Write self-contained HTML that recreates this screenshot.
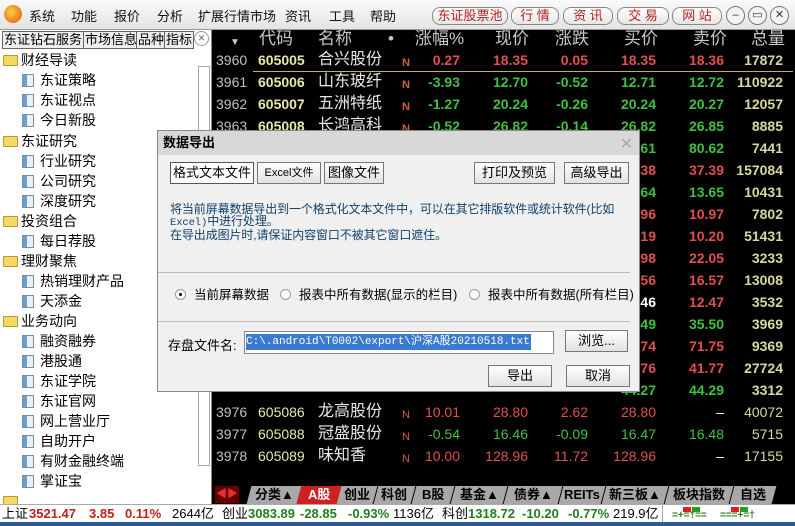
<!DOCTYPE html>
<html><head><meta charset="utf-8">
<style>
*{margin:0;padding:0;box-sizing:border-box}
body{width:795px;height:526px;overflow:hidden;position:relative;background:#000;font-family:"Liberation Sans","Noto Sans CJK SC",sans-serif;}
.a{position:absolute;white-space:nowrap}
#top{left:0;top:0;width:795px;height:30px;background:linear-gradient(#fafafa,#e4e4e4);border-bottom:1px solid #999}
#top .m{top:6px;font-size:13px;color:#111}
.rb{position:absolute;top:7px;height:18px;border:1px solid #888;border-radius:8px;background:linear-gradient(#fff,#e6e6e6);color:#b02020;font-size:13px;text-align:center;line-height:16px}
.cb{position:absolute;top:6px;width:19px;height:19px;border:1px solid #777;border-radius:50%;background:#f4f4f4;font-size:11px;text-align:center;line-height:17px;color:#333}
#left{left:0;top:30px;width:212px;height:474px;background:#fff;border-right:1px solid #888}
.tab{position:absolute;top:1px;height:18px;border:1px solid #666;background:#eee;font-size:13px;line-height:16px;padding:0 1px;color:#000}
.ti{position:absolute;font-size:14px;color:#000;height:20px;line-height:20px}
.fo{display:inline-block;width:15px;height:11px;background:#f6d860;border:1px solid #b89a30;border-radius:1px;margin-right:3px;vertical-align:-1px}
.pg{display:inline-block;width:12px;height:13px;background:linear-gradient(90deg,#6a9fd0 0 4px,#e8f0f8 4px);border:1px solid #7a8ea8;margin-right:6px;vertical-align:-2px}
#grid{left:213px;top:30px;width:582px;height:454px;background:#000}
.h{position:absolute;top:-1px;font-size:17px;color:#c8c8c8;line-height:19px}
.r{position:absolute;left:0;width:582px;height:22px;font-size:14px;font-weight:bold;line-height:22px}
.r span{position:absolute;top:0}
.n{left:3px;color:#c0c0c0;font-weight:normal}
.c{left:45px;color:#e8e8a8}
.nm{left:105px;color:#e8e8e8;font-weight:normal;font-size:16px}
.N{left:189px;color:#d06040;font-size:11px;top:3px!important}
.v{text-align:right;width:70px}
.R{color:#e05050}.G{color:#40c040}.Y{color:#d8d8a0}.W{color:#fff}
#dlg{left:157px;top:130px;width:483px;height:262px;background:#f0f0f0;border:1px solid #888}
#dlg .tb{position:absolute;left:0;top:0;width:481px;height:24px;background:#d8d8d8;font-size:13px;font-weight:bold;line-height:24px;padding-left:5px}
.btn{position:absolute;height:22px;border:1px solid #777;background:linear-gradient(#fdfdfd,#e2e2e2);font-size:13px;text-align:center;line-height:20px}
.tx{position:absolute;font-size:13px;color:#000}
.rad{display:inline-block;width:11px;height:11px;border:1px solid #999;border-radius:50%;background:#fff;vertical-align:-1px;margin-right:8px;position:relative}
#bt{left:213px;top:484px;width:582px;height:20px;background:#000}
.bt{position:absolute;top:2px;height:18px;background:#a8a8a8;font-size:13px;font-weight:bold;line-height:18px;text-align:center;color:#000;transform:skewX(-15deg)}
.bt i{display:inline-block;font-style:normal;transform:skewX(15deg)}
#st{left:0;top:504px;width:795px;height:18px;background:#fff;border-top:1px solid #aaa;font-size:13px;line-height:17px}
#st span{position:absolute}
.sg{color:#208020;font-weight:bold}.sr{color:#c02020;font-weight:bold}
</style></head><body>
<div id="top" class="a">
<div class="a" style="left:4px;top:5px;width:18px;height:18px;border-radius:50%;background:radial-gradient(circle at 40% 40%,#ffd040,#e05010);"></div>
<span class="a m" style="left:29px">系统</span><span class="a m" style="left:71px">功能</span><span class="a m" style="left:114px">报价</span><span class="a m" style="left:157px">分析</span><span class="a m" style="left:198px">扩展行情市场</span><span class="a m" style="left:285px">资讯</span><span class="a m" style="left:329px">工具</span><span class="a m" style="left:370px">帮助</span>
<div class="rb" style="left:432px;width:76px">东证股票池</div>
<div class="rb" style="left:511px;width:48px">行 情</div>
<div class="rb" style="left:563px;width:50px">资 讯</div>
<div class="rb" style="left:617px;width:52px">交 易</div>
<div class="rb" style="left:672px;width:50px">网 站</div>
<div class="cb" style="left:726px">–</div><div class="cb" style="left:748px">▭</div><div class="cb" style="left:770px">✕</div>
</div>
<div id="left" class="a">
<div class="tab" style="left:2px">东证钻石服务</div><div class="tab" style="left:83px">市场信息</div><div class="tab" style="left:136px">品种</div><div class="tab" style="left:164px">指标</div>
<div class="a" style="left:194px;top:1px;width:15px;height:15px;border:1px solid #999;border-radius:50%;font-size:9px;text-align:center;line-height:13px;color:#666">✕</div>
<div class="a" style="left:198px;top:36px;width:12px;height:400px;border:1px solid #aaa;background:#fff"></div>
<div class="ti" style="left:3px;top:20px"><i class="fo"></i>财经导读</div>
<div class="ti" style="left:22px;top:40px"><i class="pg"></i>东证策略</div>
<div class="ti" style="left:22px;top:60px"><i class="pg"></i>东证视点</div>
<div class="ti" style="left:22px;top:80px"><i class="pg"></i>今日新股</div>
<div class="ti" style="left:3px;top:101px"><i class="fo"></i>东证研究</div>
<div class="ti" style="left:22px;top:121px"><i class="pg"></i>行业研究</div>
<div class="ti" style="left:22px;top:141px"><i class="pg"></i>公司研究</div>
<div class="ti" style="left:22px;top:161px"><i class="pg"></i>深度研究</div>
<div class="ti" style="left:3px;top:181px"><i class="fo"></i>投资组合</div>
<div class="ti" style="left:22px;top:201px"><i class="pg"></i>每日荐股</div>
<div class="ti" style="left:3px;top:221px"><i class="fo"></i>理财聚焦</div>
<div class="ti" style="left:22px;top:241px"><i class="pg"></i>热销理财产品</div>
<div class="ti" style="left:22px;top:261px"><i class="pg"></i>天添金</div>
<div class="ti" style="left:3px;top:281px"><i class="fo"></i>业务动向</div>
<div class="ti" style="left:22px;top:301px"><i class="pg"></i>融资融券</div>
<div class="ti" style="left:22px;top:321px"><i class="pg"></i>港股通</div>
<div class="ti" style="left:22px;top:341px"><i class="pg"></i>东证学院</div>
<div class="ti" style="left:22px;top:361px"><i class="pg"></i>东证官网</div>
<div class="ti" style="left:22px;top:381px"><i class="pg"></i>网上营业厅</div>
<div class="ti" style="left:22px;top:401px"><i class="pg"></i>自助开户</div>
<div class="ti" style="left:22px;top:421px"><i class="pg"></i>有财金融终端</div>
<div class="ti" style="left:22px;top:441px"><i class="pg"></i>掌证宝</div>
<div class="ti" style="left:3px;top:461px"><i class="fo"></i></div>
</div>
<div id="grid" class="a">
<span class="h" style="left:17px;font-size:10px;top:3px">▼</span>
<span class="h" style="left:46px">代码</span><span class="h" style="left:105px">名称</span><span class="h" style="left:175px">•</span>
<span class="h" style="left:202px">涨幅%</span><span class="h" style="left:282px">现价</span><span class="h" style="left:342px">涨跌</span><span class="h" style="left:411px">买价</span><span class="h" style="left:480px">卖价</span><span class="h" style="left:538px">总量</span>
<div class="a" style="left:40px;top:41px;width:540px;height:1px;background:#c8b060"></div>

<div class="r" style="top:19px"><span class="n">3960</span><span class="c">605005</span><span class="nm">合兴股份</span><span class="N">N</span><span class="v R" style="left:177px">0.27</span><span class="v R" style="left:245px">18.35</span><span class="v R" style="left:305px">0.05</span><span class="v R" style="left:373px">18.35</span><span class="v R" style="left:441px">18.36</span><span class="v Y" style="left:500px">17872</span></div>
<div class="r" style="top:41px"><span class="n">3961</span><span class="c">605006</span><span class="nm">山东玻纤</span><span class="N">N</span><span class="v G" style="left:177px">-3.93</span><span class="v G" style="left:245px">12.70</span><span class="v G" style="left:305px">-0.52</span><span class="v G" style="left:373px">12.71</span><span class="v G" style="left:441px">12.72</span><span class="v Y" style="left:500px">110922</span></div>
<div class="r" style="top:63px"><span class="n">3962</span><span class="c">605007</span><span class="nm">五洲特纸</span><span class="N">N</span><span class="v G" style="left:177px">-1.27</span><span class="v G" style="left:245px">20.24</span><span class="v G" style="left:305px">-0.26</span><span class="v G" style="left:373px">20.24</span><span class="v G" style="left:441px">20.27</span><span class="v Y" style="left:500px">12057</span></div>
<div class="r" style="top:85px"><span class="n">3963</span><span class="c">605008</span><span class="nm">长鸿高科</span><span class="N">N</span><span class="v G" style="left:177px">-0.52</span><span class="v G" style="left:245px">26.82</span><span class="v G" style="left:305px">-0.14</span><span class="v G" style="left:373px">26.82</span><span class="v G" style="left:441px">26.85</span><span class="v Y" style="left:500px">8885</span></div>
<div class="r" style="top:107px"><span class="v G" style="left:373px">80.61</span><span class="v G" style="left:441px">80.62</span><span class="v Y" style="left:500px">7441</span></div>
<div class="r" style="top:129px"><span class="v R" style="left:373px">37.38</span><span class="v R" style="left:441px">37.39</span><span class="v Y" style="left:500px">157084</span></div>
<div class="r" style="top:151px"><span class="v G" style="left:373px">13.64</span><span class="v G" style="left:441px">13.65</span><span class="v Y" style="left:500px">10431</span></div>
<div class="r" style="top:173px"><span class="v R" style="left:373px">10.96</span><span class="v R" style="left:441px">10.97</span><span class="v Y" style="left:500px">7802</span></div>
<div class="r" style="top:195px"><span class="v R" style="left:373px">10.19</span><span class="v R" style="left:441px">10.20</span><span class="v Y" style="left:500px">51431</span></div>
<div class="r" style="top:217px"><span class="v R" style="left:373px">21.98</span><span class="v R" style="left:441px">22.05</span><span class="v Y" style="left:500px">3233</span></div>
<div class="r" style="top:239px"><span class="v R" style="left:373px">16.56</span><span class="v R" style="left:441px">16.57</span><span class="v Y" style="left:500px">13008</span></div>
<div class="r" style="top:261px"><span class="v W" style="left:373px">12.46</span><span class="v R" style="left:441px">12.47</span><span class="v Y" style="left:500px">3532</span></div>
<div class="r" style="top:283px"><span class="v G" style="left:373px">35.49</span><span class="v G" style="left:441px">35.50</span><span class="v Y" style="left:500px">3969</span></div>
<div class="r" style="top:305px"><span class="v R" style="left:373px">71.74</span><span class="v R" style="left:441px">71.75</span><span class="v Y" style="left:500px">9369</span></div>
<div class="r" style="top:327px"><span class="v R" style="left:373px">41.76</span><span class="v R" style="left:441px">41.77</span><span class="v Y" style="left:500px">27724</span></div>
<div class="r" style="top:349px"><span class="v G" style="left:373px">44.27</span><span class="v G" style="left:441px">44.29</span><span class="v Y" style="left:500px">3312</span></div>
<div class="r" style="top:371px;font-weight:normal"><span class="n">3976</span><span class="c">605086</span><span class="nm">龙高股份</span><span class="N">N</span><span class="v R" style="left:177px">10.01</span><span class="v R" style="left:245px">28.80</span><span class="v R" style="left:305px">2.62</span><span class="v R" style="left:373px">28.80</span><span class="v W" style="left:441px">–</span><span class="v Y" style="left:500px">40072</span></div>
<div class="r" style="top:393px;font-weight:normal"><span class="n">3977</span><span class="c">605088</span><span class="nm">冠盛股份</span><span class="N">N</span><span class="v G" style="left:177px">-0.54</span><span class="v G" style="left:245px">16.46</span><span class="v G" style="left:305px">-0.09</span><span class="v G" style="left:373px">16.47</span><span class="v G" style="left:441px">16.48</span><span class="v Y" style="left:500px">5715</span></div>
<div class="r" style="top:415px;font-weight:normal"><span class="n">3978</span><span class="c">605089</span><span class="nm">味知香</span><span class="N">N</span><span class="v R" style="left:177px">10.00</span><span class="v R" style="left:245px">128.96</span><span class="v R" style="left:305px">11.72</span><span class="v R" style="left:373px">128.96</span><span class="v W" style="left:441px">–</span><span class="v Y" style="left:500px">17155</span></div>
</div>
<div id="bt" class="a">
<div class="a" style="left:2px;top:2px;width:24px;height:17px;background:#600;color:#e03030;font-size:11px;line-height:17px;text-align:center">◀▶</div>
<div class="bt" style="left:36px;width:50px"><i>分类▲</i></div>
<div class="bt" style="left:86px;width:40px;background:#d02020;color:#fff"><i>A股</i></div>
<div class="bt" style="left:126px;width:36px"><i>创业</i></div>
<div class="bt" style="left:163px;width:37px"><i>科创</i></div>
<div class="bt" style="left:201px;width:38px"><i>B股</i></div>
<div class="bt" style="left:240px;width:52px"><i>基金▲</i></div>
<div class="bt" style="left:293px;width:54px"><i>债券▲</i></div>
<div class="bt" style="left:348px;width:42px"><i>REITs</i></div>
<div class="bt" style="left:391px;width:62px"><i>新三板▲</i></div>
<div class="bt" style="left:454px;width:64px"><i>板块指数</i></div>
<div class="bt" style="left:519px;width:42px"><i>自选</i></div>
</div>
<div id="st" class="a">
<span style="left:2px">上证</span><span class="sr" style="left:29px">3521.47</span><span class="sr" style="left:89px">3.85</span><span class="sr" style="left:125px">0.11%</span><span style="left:172px">2644亿</span>
<span style="left:222px">创业</span><span class="sg" style="left:248px">3083.89</span><span class="sg" style="left:300px">-28.85</span><span class="sg" style="left:348px">-0.93%</span><span style="left:393px">1136亿</span>
<span style="left:442px">科创</span><span class="sg" style="left:468px">1318.72</span><span class="sg" style="left:522px">-10.20</span><span class="sg" style="left:568px">-0.77%</span><span style="left:613px">219.9亿</span>
<span style="left:662px;top:0;width:1px;height:18px;background:#aaa"></span>
<span style="left:683px;top:2px;width:8px;height:5px;background:#e02020"></span><span style="left:692px;top:2px;width:8px;height:5px;background:#20a020"></span>
<span class="sg" style="left:672px;top:6px;font-size:10px;line-height:10px">=+=†==</span>
<span style="left:731px;top:2px;width:8px;height:5px;background:#e02020"></span><span style="left:740px;top:2px;width:8px;height:5px;background:#20a020"></span>
<span class="sg" style="left:720px;top:6px;font-size:10px;line-height:10px">===+=†</span>
</div>
<div class="a" style="left:0;top:522px;width:795px;height:4px;background:#2a5a9a"></div>

<div id="dlg" class="a">
<div class="tb">数据导出</div>
<div class="a" style="right:6px;top:3px;color:#aaa;font-size:16px">✕</div>
<div class="btn" style="left:12px;top:31px;width:84px;background:#fff;border-color:#555">格式文本文件</div>
<div class="btn" style="left:99px;top:31px;width:64px;font-size:11px">Excel文件</div>
<div class="btn" style="left:166px;top:31px;width:60px">图像文件</div>
<div class="btn" style="left:316px;top:31px;width:81px">打印及预览</div>
<div class="btn" style="left:406px;top:31px;width:65px">高级导出</div>
<div class="tx" style="left:12px;top:72px;color:#10406a;line-height:12px;font-size:12px;letter-spacing:-0.1px">将当前屏幕数据导出到一个格式化文本文件中，可以在其它排版软件或统计软件(比如<br><span style="font-family:'Liberation Mono',monospace;font-size:10.5px">Excel)</span>中进行处理。<br>在导出成图片时,请保证内容窗口不被其它窗口遮住。</div>
<div class="a" style="left:0;top:141px;width:472px;height:1px;background:#bbb"></div>
<div class="tx" style="left:17px;top:153px;font-size:12.5px"><i class="rad"><b style="position:absolute;left:3px;top:3px;width:3px;height:3px;background:#000;border-radius:50%"></b></i>当前屏幕数据</div>
<div class="tx" style="left:122px;top:153px;font-size:12.5px"><i class="rad"></i>报表中所有数据(显示的栏目)</div>
<div class="tx" style="left:311px;top:153px;font-size:12.5px"><i class="rad"></i>报表中所有数据(所有栏目)</div>
<div class="a" style="left:0;top:190px;width:472px;height:1px;background:#bbb"></div>
<div class="tx" style="left:10px;top:204px">存盘文件名:</div>
<div class="a" style="left:86px;top:200px;width:310px;height:23px;background:#fff;border:1px solid #888"></div>
<div class="a" style="left:88px;top:203px;height:16px;background:#3a7ad0;color:#fff;font-family:'Liberation Mono','Noto Sans CJK SC',monospace;font-size:11px;line-height:16px;padding-right:1px">C:\.android\T0002\export\沪深A股20210518.txt</div>
<div class="btn" style="left:407px;top:199px;width:63px">浏览...</div>
<div class="btn" style="left:330px;top:234px;width:64px">导出</div>
<div class="btn" style="left:408px;top:234px;width:64px">取消</div>
</div>
</body></html>
